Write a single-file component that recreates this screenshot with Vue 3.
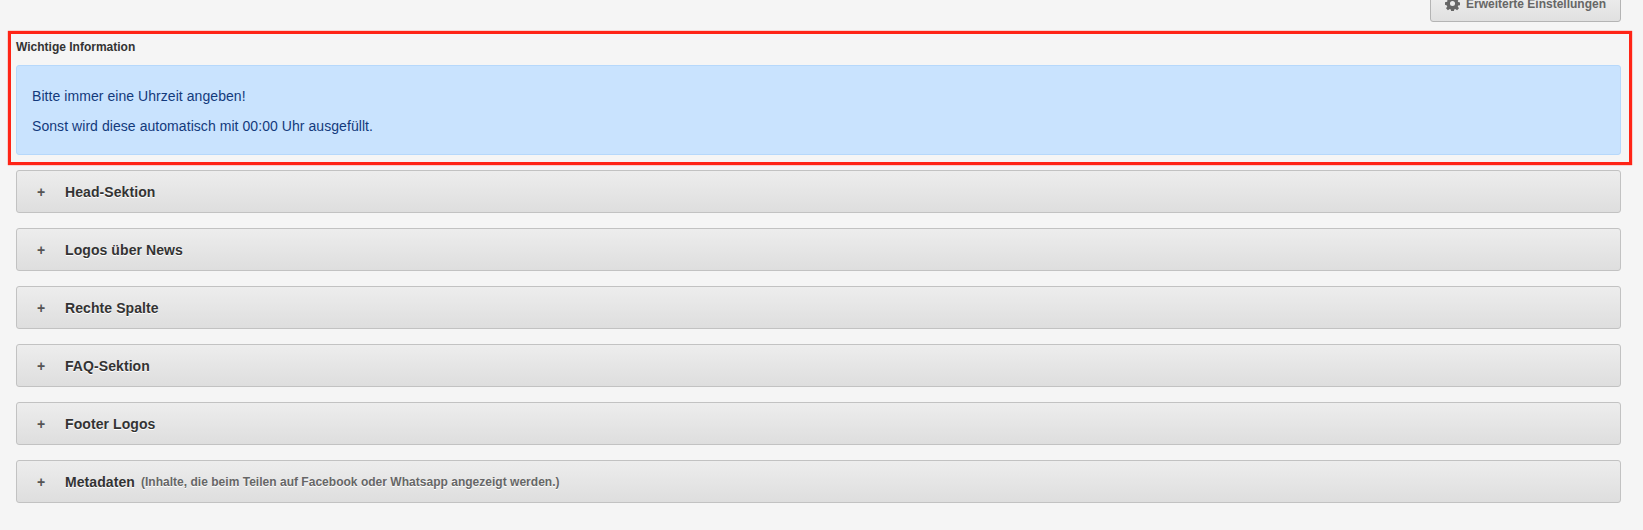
<script setup>
const panels = [
  { title: 'Head-Sektion' },
  { title: 'Logos über News' },
  { title: 'Rechte Spalte' },
  { title: 'FAQ-Sektion' },
  { title: 'Footer Logos' },
  { title: 'Metadaten', note: '(Inhalte, die beim Teilen auf Facebook oder Whatsapp angezeigt werden.)' },
]
</script>

<template>
  <div class="page">
    <div class="toolbar">
      <button class="settings" type="button">
        <svg class="gear" viewBox="0 0 16 16" width="15" height="15" aria-hidden="true">
          <path fill="#666" fill-rule="evenodd" d="M6.6 0h2.8l.4 2.2 1.2.5 1.9-1.3 2 2-1.3 1.9.5 1.2 2.2.4v2.8l-2.2.4-.5 1.2 1.3 1.9-2 2-1.9-1.3-1.2.5-.4 2.2H6.600l-.4-2.2-1.200-.5-1.900 1.300-2-2 1.300-1.900-.5-1.200L0 9.400V6.600l2.200-.4.5-1.200L1.400 3.100l2-2 1.900 1.300 1.200-.5zM8 5.300a2.700 2.700 0 1 0 0 5.400 2.700 2.700 0 0 0 0-5.400z"/>
        </svg>
        <span>Erweiterte Einstellungen</span>
      </button>
    </div>

    <section class="highlight">
      <h4 class="label">Wichtige Information</h4>
      <div class="alert">
        <p>Bitte immer eine Uhrzeit angeben!</p>
        <p>Sonst wird diese automatisch mit 00:00 Uhr ausgefüllt.</p>
      </div>
    </section>

    <div class="panels">
      <div v-for="panel in panels" :key="panel.title" class="panel">
        <span class="plus">+</span>
        <span class="title">{{ panel.title }}</span>
        <small v-if="panel.note" class="note">{{ panel.note }}</small>
      </div>
    </div>
  </div>
</template>

<style>
html, body { margin: 0; background: #f5f5f5; }
</style>

<style scoped>
.page {
  height: 530px;
  overflow: hidden;
  box-sizing: border-box;
  padding: 0 22px 0 16px;
  background: #f5f5f5;
  font-family: "Liberation Sans", Arial, sans-serif;
  color: #333;
}
.toolbar {
  display: flex;
  justify-content: flex-end;
  height: 22px;
  align-items: flex-end;
}
.settings {
  display: flex;
  align-items: center;
  justify-content: center;
  gap: 6px;
  width: 191px;
  height: 34px;
  flex: none;
  box-sizing: border-box;
  padding: 0 0 3px;
  border: 1px solid #b4b4b4;
  border-radius: 3px;
  background: linear-gradient(#f0f0f0, #e0e0e0);
  color: #666;
  font: bold 12px "Liberation Sans", Arial, sans-serif;
}
.gear { flex: none; }
.highlight {
  margin: 9px -11px 0 -8px;
  height: 134px;
  box-sizing: border-box;
  border: 3px solid #ff2416;
  box-shadow: 0 0 1px #ff2416;
  padding: 0 8px 0 5px;
}
.label {
  margin: 0;
  height: 31px;
  line-height: 27px;
  font-size: 12px;
  font-weight: bold;
  color: #333;
}
.alert {
  height: 90px;
  box-sizing: border-box;
  padding: 20px 15px 0;
  border: 1px solid #b6d8fb;
  border-radius: 3px;
  background: #c9e3fe;
  color: #133a7c;
  font-size: 14px;
  line-height: 20px;
  letter-spacing: .06px;
}
.alert p { margin: 0 0 10px; }
.panels {
  display: flex;
  flex-direction: column;
  gap: 15px;
  margin-top: 5px;
}
.panel {
  display: flex;
  align-items: center;
  height: 43px;
  box-sizing: border-box;
  padding-left: 20px;
  border: 1px solid #c2c2c2;
  border-radius: 3px;
  background: linear-gradient(#ededed, #dedede);
}
.plus {
  width: 28px;
  flex: none;
  font-size: 14px;
  font-weight: bold;
  color: #555;
}
.title {
  font-size: 14px;
  font-weight: bold;
  letter-spacing: .08px;
  color: #333;
  text-shadow: 0 1px 0 #fff;
}
.note {
  margin-left: 6px;
  font-size: 12px;
  font-weight: bold;
  letter-spacing: .02px;
  color: #666;
  text-shadow: 0 1px 0 #fff;
}
</style>
